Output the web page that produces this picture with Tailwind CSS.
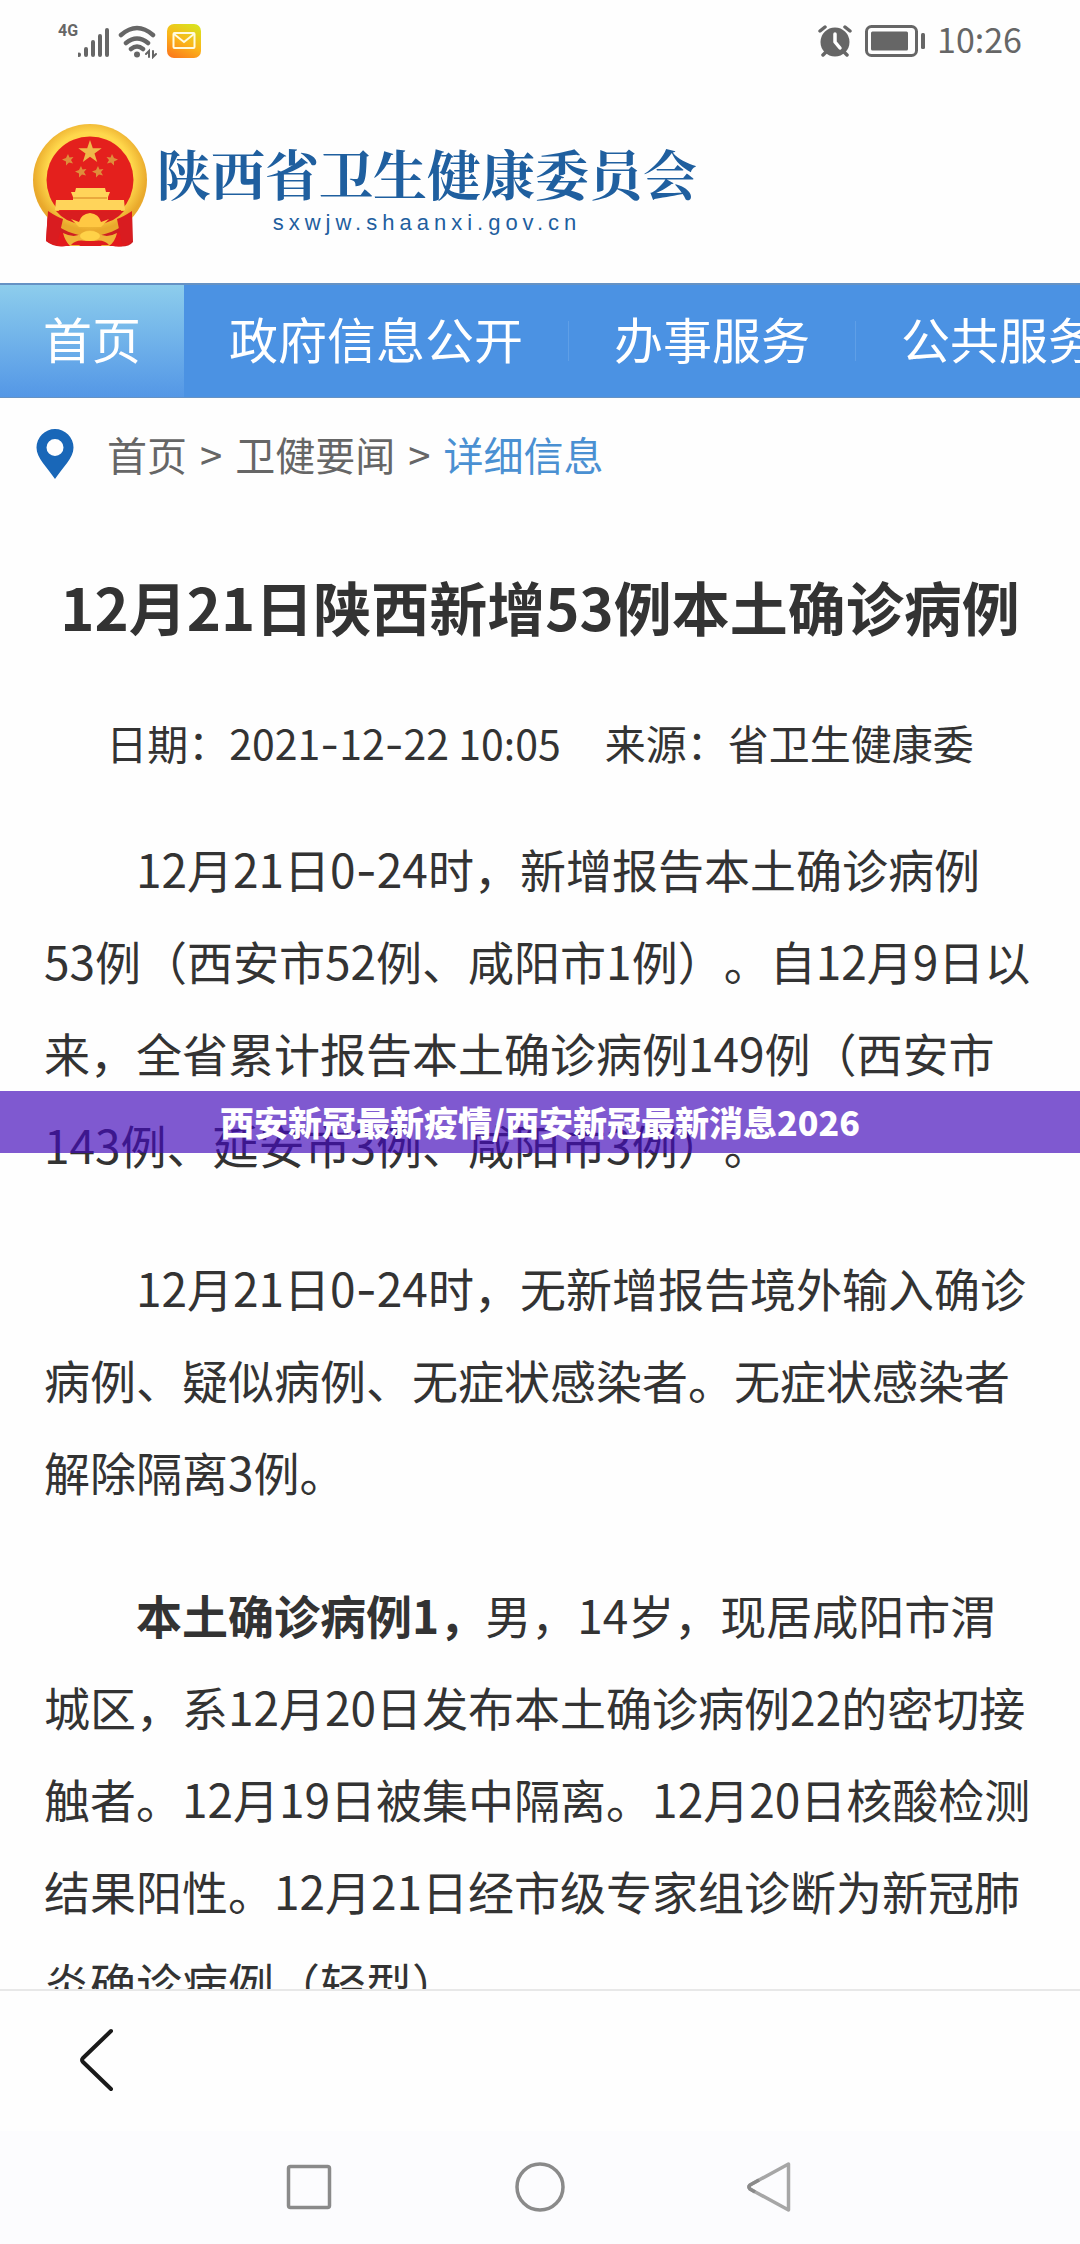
<!DOCTYPE html>
<html lang="zh-CN">
<head>
<meta charset="utf-8">
<meta name="viewport" content="width=device-width, initial-scale=1">
<title>12月21日陕西新增53例本土确诊病例</title>
<script src="https://cdn.jsdelivr.net/npm/@tailwindcss/browser@4"></script>
</head>
<body class="relative flex h-screen flex-col overflow-hidden bg-[#fefefe] font-['Noto_Sans_CJK_SC',sans-serif] text-[#333333] [text-spacing-trim:space-all]">

<!-- Status bar -->
<div class="flex h-[82px] shrink-0 items-center justify-between pl-[58px] pr-[58px] text-[#666666]">
  <div class="flex items-center gap-2">
    <div class="flex">
      <span class="h-9 w-5 font-['Roboto',sans-serif] text-base leading-4 font-bold">4G</span>
      <svg class="h-9 w-8" viewBox="0 0 32 36" fill="none" stroke="currentColor" stroke-width="4" stroke-linecap="round"><path d="M1 31.500v.5M8 26v6M15 19v13M22 13v19M29 7v25"/></svg>
    </div>
    <svg class="h-9 w-10" viewBox="0 0 40 36" fill="none" stroke="currentColor" stroke-width="4.500" stroke-linecap="round"><path d="M3 12Q19 -2 35 12M8 20Q19 11 30 20M13 26Q19 21 25 26"/><circle cx="19" cy="31.500" r="3" fill="currentColor" stroke="none"/><path d="M31 34v-6l-3 3M35 28v6l3-3" stroke-width="2"/></svg>
    <svg class="h-9 w-9" viewBox="0 0 36 36"><defs><linearGradient id="mail" x1="0.2" y1="1" x2="0.7" y2="0"><stop offset="0" stop-color="#fb7a1c"/><stop offset=".5" stop-color="#fbb51a"/><stop offset="1" stop-color="#dbe01e"/></linearGradient></defs><rect x="1" y="1" width="34" height="34" rx="7" fill="url(#mail)"/><rect x="7.500" y="10" width="21" height="15" rx="1" fill="none" stroke="#fffbe0" stroke-width="2"/><path d="M8 11l10 8 10-8" fill="none" stroke="#fffbe0" stroke-width="2"/></svg>
  </div>
  <div class="flex items-center gap-3">
    <svg class="h-8 w-9" viewBox="0 0 36 32"><circle cx="18" cy="17" r="14.500" fill="currentColor"/><path d="M3 6l5-4M33 6l-5-4M6 30l4-4M30 30l-4-4" stroke="currentColor" stroke-width="3.500" stroke-linecap="round"/><path d="M18 9v8l5 6" fill="none" stroke="#fff" stroke-width="3.500" stroke-linecap="round" stroke-linejoin="round"/></svg>
    <svg class="h-8 w-[60px]" viewBox="0 0 60 32"><rect x="1.500" y="1.500" width="50" height="29" rx="5" fill="none" stroke="currentColor" stroke-width="3"/><rect x="6" y="6.500" width="37" height="19" rx="1.500" fill="currentColor"/><rect x="56" y="8" width="4" height="16" rx="1.500" fill="currentColor"/></svg>
    <time class="pb-1 text-[34px] leading-9">10:26</time>
  </div>
</div>

<!-- Site header -->
<header class="flex h-[201px] shrink-0 items-start gap-[9px] pt-[41px] pl-8">
  <svg class="h-[125px] w-[116px] shrink-0" viewBox="0 0 116 125">
    <defs><radialGradient id="gold" cx=".5" cy=".45" r=".5"><stop offset=".75" stop-color="#ffd84c"/><stop offset="1" stop-color="#e9a92c"/></radialGradient></defs>
    <path d="M16 86L14 118q8 7 20 5h50q12 2 17-4l-1-33z" fill="#cf1f22"/>
    <path d="M17 100q20 18 40 16 22 2 42-16v19q-8 6-18 4H34q-12 1-19-5z" fill="#e3191c"/>
    <ellipse cx="58" cy="57" rx="57" ry="56" fill="url(#gold)"/>
    <path d="M16 88q9 6 15 8l-6 26-11-4zM100 88q-9 6-15 8l5 25 10-3z" fill="#d91c20"/>
    <circle cx="58" cy="57" r="43.500" fill="#e4201d"/>
    <path d="M58 17l2.800 8.200h8.900l-7.200 5.200 2.700 8.500L58 33.800l-7.200 5.100 2.700-8.500-7.200-5.200h8.900z" fill="#efb84a"/>
    <g fill="#df8d3b"><path d="M36 31l1.500 3.500 4-.5-2.500 3 2 3.500-4-1-3 3v-4l-4-2 4-1.500zM80 31l-1.500 3.500-4-.5 2.500 3-2 3.500 4-1 3 3v-4l4-2-4-1.500zM49 43l1.500 3.500 4-.5-2.500 3 2 3.500-4-1-3 3v-4l-4-2 4-1.500zM66 43l1.500 3.500 4-.5-2.500 3 2 3.500-4-1-3 3v-4l-4-2 4-1.500z"/></g>
    <path d="M44 65h29l1 4h4l-2 5v3h16l1 10H23l1-10h17v-3l-2-5h4z" fill="#ffd45a"/>
    <path d="M41 75h34" stroke="#e39b35" stroke-width="1.500"/>
    <path d="M24 88h68q-5 6-11 9l-13 5q-10-8-20 0l-13-5q-6-3-11-9z" fill="#d91d1f"/>
    <path d="M47 99q2-8 11-9 9 1 11 9l8-3-8 8H47l-8-8z" fill="#ffc843"/>
    <path d="M31 110q12 6 19 0 8-6 16 0 8 6 19 0-2 9-8 13h-7q-12-9-23 0h-9q-5-5-7-13z" fill="#f0b43a"/>
    <path d="M39 122q5-6 15-4h8q10-2 15 4z" fill="#df1c1e"/>
    <ellipse cx="58" cy="113" rx="10" ry="5" fill="#ffd248"/>
  </svg>
  <div class="flex flex-col items-center pt-[18px] text-[#1f5f9f]">
    <p class="font-['Noto_Serif_CJK_SC','Noto_Sans_CJK_SC',serif] text-[54px] leading-[64px] font-bold whitespace-nowrap">陕西省卫生健康委员会</p>
    <p class="pt-1 font-['Liberation_Sans',sans-serif] text-[22px] leading-7 tracking-[5px]">sxwjw.shaanxi.gov.cn</p>
  </div>
</header>

<!-- Main menu -->
<nav class="flex h-[115px] shrink-0 items-stretch overflow-hidden border-t-2 border-b border-t-[#6592c4] border-b-[#6592c4] bg-[#4b92e3] text-[49px] leading-[72px] whitespace-nowrap text-white">
  <a href="#" class="flex items-center bg-linear-to-b from-[#8dcdec] to-[#5497e6] px-[43px] pb-1.5">首页</a>
  <a href="#" class="flex items-center px-[45px] pb-1.5">政府信息公开</a>
  <span class="my-9 w-px shrink-0 bg-[#5f9fe7]"></span>
  <a href="#" class="flex items-center px-[45px] pb-1.5">办事服务</a>
  <span class="my-9 w-px shrink-0 bg-[#5f9fe7]"></span>
  <a href="#" class="flex items-center px-[45px] pb-1.5">公共服务</a>
</nav>

<main class="min-h-0 flex-1 overflow-hidden">
  <!-- Breadcrumb -->
  <div class="flex h-28 items-center gap-[13px] pl-9 text-[40px] leading-[60px] text-[#666666]">
    <svg class="mr-5 h-[50px] w-[38px]" viewBox="0 0 38 50"><path fill="#1967b8" fill-rule="evenodd" d="M19 0A18.500 18.500 0 0 0 .5 18.500C.5 29 11 38 19 50c8-12 18.500-21 18.500-31.500A18.500 18.500 0 0 0 19 0zm0 10a8.500 8.500 0 1 1 0 17 8.500 8.500 0 0 1 0-17z"/></svg>
    <a href="#">首页</a><span>&gt;</span><a href="#">卫健要闻</a><span>&gt;</span><a href="#" class="text-[#4a90d2]">详细信息</a>
  </div>

  <article>
    <h1 class="pt-[54px] text-center text-[58px] leading-[84px] font-bold whitespace-nowrap">12月21日陕西新增53例本土确诊病例</h1>
    <p class="flex justify-center gap-11 pt-16 text-[41px] leading-[60px] whitespace-nowrap">
      <span>日期：2021<span class="font-['Inter'] leading-none">-</span>12<span class="font-['Inter'] leading-none">-</span>22 10:05</span>
      <span>来源：省卫生健康委</span>
    </p>
    <div class="flex flex-col gap-[51px] pt-[50px] pr-12 pl-11 text-[46px] leading-[92px]">
      <p class="indent-[92px]">12月21日0<span class="font-['Inter'] leading-none">-</span>24时，新增报告本土确诊病例<br>53例（西安市52例、咸阳市1例）。自12月9日以来，全省累计报告本土确诊病例149例（西安市143例、延安市3例、咸阳市3例）。</p>
      <p class="indent-[92px]">12月21日0<span class="font-['Inter'] leading-none">-</span>24时，无新增报告境外输入确诊病例、疑似病例、无症状感染者。无症状感染者解除隔离3例。</p>
      <p class="indent-[92px]"><strong>本土确诊病例1，</strong>男，14岁，现居咸阳市渭城区，系12月20日发布本土确诊病例22的密切接触者。12月19日被集中隔离。12月20日核酸检测结果阳性。12月21日经市级专家组诊断为新冠肺炎确诊病例（轻型）。</p>
    </div>
  </article>
</main>

<!-- Browser toolbar -->
<div class="flex h-[142px] shrink-0 items-center border-t-2 border-[#e8e8e8] bg-[#fefefe] pb-0.5 pl-[78px]">
  <button type="button" aria-label="返回"><svg class="h-16 w-9" viewBox="0 0 36 64" fill="none" stroke="#1a1a1a" stroke-width="4" stroke-linecap="round" stroke-linejoin="round"><path d="M33 3L5 30q-2 2 0 4l28 27"/></svg></button>
</div>

<!-- System navigation -->
<div class="flex h-[113px] shrink-0 items-center justify-center gap-[179px] bg-[#fcfcfe] pb-0.5">
  <button type="button" aria-label="最近任务"><svg class="h-[52px] w-[52px]" viewBox="0 0 52 52" fill="none" stroke="#8a8a8a" stroke-width="3.500"><rect x="5.500" y="5.500" width="41" height="41" rx="2"/></svg></button>
  <button type="button" aria-label="主屏幕"><svg class="h-[52px] w-[52px]" viewBox="0 0 52 52" fill="none" stroke="#8a8a8a" stroke-width="3.500"><circle cx="26" cy="26" r="23"/></svg></button>
  <button type="button" aria-label="返回上一级"><svg class="h-[52px] w-[52px]" viewBox="0 0 52 52" fill="none" stroke="#a6a6a6" stroke-width="3.500" stroke-linejoin="round"><path d="M43.500 3v46L5 28q-2-2 0-4z"/><path d="M14 19L5 24q-2 2 0 4l5 3" stroke="#8a8a8a"/></svg></button>
</div>

<!-- Caption band laid over the page -->
<div class="absolute inset-x-0 top-[1091px] flex h-[62px] items-center justify-center bg-[#430ab9]/68 text-[34px] leading-[50px] font-black whitespace-nowrap text-white">西安新冠最新疫情/西安新冠最新消息2026</div>
</body>
</html>
